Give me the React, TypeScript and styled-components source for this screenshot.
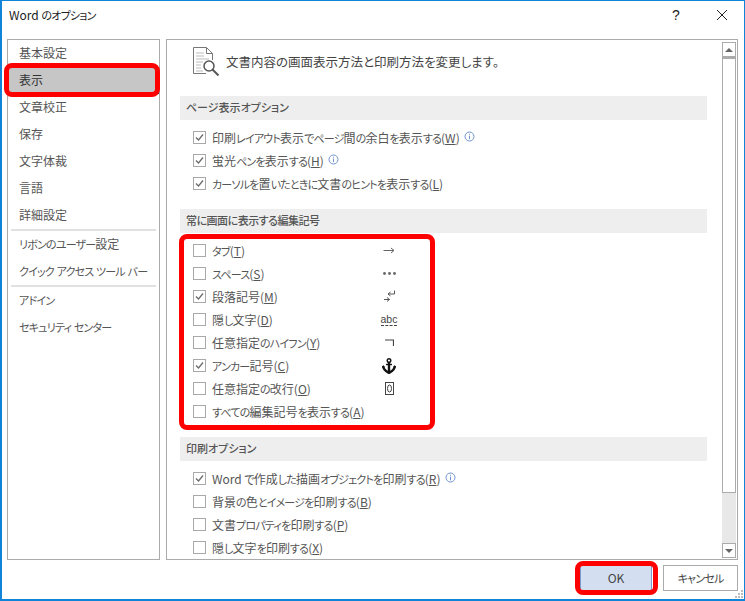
import React from 'react';
import styled, {createGlobalStyle} from 'styled-components';

const GlobalStyle = createGlobalStyle`
  html, body {
    margin: 0;
    padding: 0;
    background: #fff;
  }
`

const Window = styled.div`
  position: relative;
  box-sizing: border-box;
  width: 745px;
  height: 601px;
  display: flex;
  flex-direction: column;
  background: #fff;
  border-style: solid;
  border-color: #0f84d8;
  border-width: 1px 1px 2px 2px;
  padding: 0 6px 0 5px;
  font-family: "Noto Sans CJK JP", "Noto Sans", sans-serif;
  font-size: 12px;
  font-feature-settings: "palt";
  color: #555;
  overflow: hidden;
`

const TitleBar = styled.div`
  height: 38px;
  flex: none;
  display: flex;
  align-items: center;
  color: #222;
  font-size: 12px;
  padding: 0 0 10px 2px;
  box-sizing: border-box;
`

const TitleText = styled.div`
  flex: 1;
  margin-top: -1px;
`

const HelpMark = styled.div`
  font-family: "Liberation Sans", sans-serif;
  font-size: 14px;
  color: #222;
  width: 14px;
  margin-right: 34px;
  text-align: center;
`

const CloseMark = styled.svg`
  width: 10px;
  height: 10px;
  margin-right: 11px;
`

const Body = styled.div`
  height: 521px;
  flex: none;
  display: flex;
  gap: 6px;
`

const Sidebar = styled.div`
  box-sizing: border-box;
  width: 153px;
  flex: none;
  border: 1px solid #ababab;
`

const SideItem = styled.div<{ $selected?: boolean }>`
  height: 27px;
  line-height: 26px;
  padding-left: 11px;
  box-sizing: border-box;
  white-space: nowrap;
  background: ${(props) => props.$selected ? '#c6c6c6' : 'transparent'};
  outline: ${(props) => props.$selected ? '1px dotted #333' : 'none'};
  outline-offset: -1px;
  color: ${(props) => props.$selected ? '#333' : '#555'};
`

const SideSeparator = styled.div`
  height: 2px;
  margin: 0 3px;
  background: #e1e1e1;
`

const MainPanel = styled.div`
  box-sizing: border-box;
  flex: none;
  width: 572px;
  display: flex;
  border: 1px solid #ababab;
`

const Content = styled.div`
  flex: 1;
  padding: 0 15px 0 13px;
  overflow: hidden;
`

const Intro = styled.div`
  height: 56px;
  display: flex;
  align-items: center;
  gap: 6px;
  padding: 0 0 13px 13px;
  box-sizing: border-box;
  font-size: 12.5px;
  color: #444;
`

const SectionHeader = styled.div<{ $tight?: boolean }>`
  height: 24px;
  line-height: 23px;
  background: #eeeeee;
  padding-left: 6px;
  font-size: 11px;
  color: #555;
  font-weight: 500;
  letter-spacing: ${(props) => props.$tight ? '-0.5px' : '0'};
`

const Rows = styled.div`
  padding: 6px 0 0 13px;
  margin-bottom: 14px;
`

const Row = styled.div`
  height: 23px;
  display: flex;
  align-items: center;
  position: relative;
`

const CheckBoxFrame = styled.div`
  box-sizing: border-box;
  width: 13px;
  height: 13px;
  flex: none;
  border: 1px solid #a9a9a9;
  background: #fff;
  margin-right: 6px;
  display: flex;
  align-items: center;
  justify-content: center;
`

const RowLabel = styled.span`
  white-space: nowrap;
`

const Kana = styled.span`
  font-size: 11px;
  letter-spacing: -0.8px;
`

const InfoMark = styled.svg`
  width: 11px;
  height: 11px;
  margin-left: 4px;
  margin-top: -3px;
`

const SymbolCell = styled.div`
  position: absolute;
  left: 184px;
  top: 0;
  width: 24px;
  height: 23px;
  display: flex;
  align-items: center;
  justify-content: center;
  color: #555;
`

const AbcMark = styled.span`
  font-family: "Liberation Sans", sans-serif;
  font-size: 10.5px;
  line-height: 11px;
  border-bottom: 1px dashed #444;
  font-feature-settings: normal;
  color: #444;
`

const ScrollBar = styled.div`
  width: 14px;
  flex: none;
  margin: 2px 1px 0 0;
  height: 516px;
  background: #e8e8e8;
  display: flex;
  flex-direction: column;
`

const ScrollButton = styled.div`
  box-sizing: border-box;
  height: 15px;
  flex: none;
  background: #fff;
  border: 1px solid #ababab;
  display: flex;
  align-items: center;
  justify-content: center;
`

const ScrollThumb = styled.div`
  box-sizing: border-box;
  height: 436px;
  flex: none;
  background: #fff;
  border: 1px solid #ababab;
  border-top-width: 2px;
`

const ScrollTrack = styled.div`
  flex: 1;
`

const Arrow = styled.div<{ $down?: boolean }>`
  width: 0;
  height: 0;
  border-left: 4px solid transparent;
  border-right: 4px solid transparent;
  ${(props) => props.$down ? 'border-top: 4px solid #666;' : 'border-bottom: 4px solid #666;'}
`

const Footer = styled.div`
  flex: 1;
  display: flex;
  justify-content: flex-end;
  align-items: flex-start;
  gap: 11px;
  padding-top: 5px;
`

const FooterButton = styled.div<{ $primary?: boolean }>`
  box-sizing: border-box;
  width: ${(props) => props.$primary ? '72px' : '75px'};
  height: 26px;
  line-height: 24px;
  text-align: center;
  background: ${(props) => props.$primary ? '#d3dff0' : '#fff'};
  border: 1px solid ${(props) => props.$primary ? '#7a9bd0' : '#ababab'};
  color: #444;
`

const Grip = styled.svg`
  position: absolute;
  right: 0;
  bottom: 0;
  width: 9px;
  height: 9px;
`

const Highlight = styled.div<{ $left: number, $top: number, $width: number, $height: number }>`
  position: absolute;
  box-sizing: border-box;
  left: ${(props) => props.$left}px;
  top: ${(props) => props.$top}px;
  width: ${(props) => props.$width}px;
  height: ${(props) => props.$height}px;
  border: 5px solid #fe0000;
  border-radius: 8px;
  pointer-events: none;
`

// Kana in the reference's UI font is much narrower than the kanji next to it
const Narrow: React.FC<{ text: string }> = ({text}) => <>
    {text.split(/([\u3040-\u30ff]+)/).map((part, index) =>
        index % 2 === 1 ? <Kana key={index}>{part}</Kana> : part)}
</>

const CheckBox: React.FC<{ checked?: boolean }> = ({checked}) => <CheckBoxFrame>
    {checked && <svg width="9" height="9" viewBox="0 0 9 9">
        <path d="M1 4.5 L3.5 7 L8 1.5" fill="none" stroke="#6b6b6b" strokeWidth="1.3"/>
    </svg>}
</CheckBoxFrame>

const Info = () => <InfoMark viewBox="0 0 11 11">
    <circle cx="5.5" cy="5.5" r="4.5" fill="none" stroke="#6f93cf" strokeWidth="1"/>
    <rect x="5" y="2.7" width="1" height="1" fill="#6f93cf"/>
    <rect x="5" y="4.6" width="1" height="3.6" fill="#6f93cf"/>
</InfoMark>

const DocIcon = () => <svg width="27" height="29" viewBox="0 0 27 29" style={{flex: 'none'}}>
    <path d="M0.5 0.5 H13.5 L19.5 6.5 V13 M13.5 0.5 V6.5 H19.5 M0.5 0.5 V26.5 H13" fill="none" stroke="#777" strokeWidth="1"/>
    <path d="M3 6H11M3 9H11M3 12H16M3 15H10M3 18H8M3 21H8M3 24H10" stroke="#bbb" strokeWidth="1"/>
    <circle cx="16" cy="19" r="5" fill="#fff" stroke="#555" strokeWidth="1.5"/>
    <path d="M19.5 22.5 L25.5 28.5" stroke="#555" strokeWidth="2"/>
</svg>

const ArrowSymbol = () => <svg width="12" height="9" viewBox="0 0 12 9">
    <path d="M0.5 4.5H11M8 2L11 4.5L8 7" fill="none" stroke="#666" strokeWidth="1"/>
</svg>

const DotsSymbol = () => <svg width="13" height="3" viewBox="0 0 13 3">
    <circle cx="1.5" cy="1.5" r="1.4" fill="#666"/>
    <circle cx="6.5" cy="1.5" r="1.4" fill="#666"/>
    <circle cx="11.5" cy="1.5" r="1.4" fill="#666"/>
</svg>

const ParagraphSymbol = () => <svg width="11" height="13" viewBox="0 0 11 13">
    <path d="M10.5 0.5V4H4.5M6.5 2L4 4L6.5 6" fill="none" stroke="#555" strokeWidth="1"/>
    <path d="M0 9.5H5.5M3 7.5L5.5 9.5L3 11.5" fill="none" stroke="#555" strokeWidth="1"/>
</svg>

const HyphenSymbol = () => <svg width="9" height="7" viewBox="0 0 9 7">
    <path d="M0 1H8.5V7" fill="none" stroke="#444" strokeWidth="1.2"/>
</svg>

const AnchorSymbol = () => <svg width="14" height="16" viewBox="0 0 14 16">
    <circle cx="7" cy="2.5" r="1.8" fill="none" stroke="#111" strokeWidth="1.4"/>
    <path d="M7 4V15" stroke="#111" strokeWidth="2.4"/>
    <path d="M4 6.5H10" stroke="#111" strokeWidth="1.4"/>
    <path d="M1.2 8C1.2 12 4.5 13.6 7 15C9.5 13.6 12.8 12 12.8 8" fill="none" stroke="#111" strokeWidth="2.4"/>
    <path d="M0 9.5L1.2 7L3 9.5ZM11 9.5L12.8 7L14 9.5Z" fill="#111"/>
</svg>

const ZeroBoxSymbol = () => <svg width="9" height="13" viewBox="0 0 9 13">
    <rect x="0.5" y="0.5" width="8" height="12" fill="none" stroke="#444" strokeWidth="1"/>
    <ellipse cx="4.5" cy="6.5" rx="2" ry="3.6" fill="none" stroke="#444" strokeWidth="1"/>
</svg>

interface OptionRow {
    label: string
    accessKey: string
    checked?: boolean
    info?: boolean
    symbol?: React.ReactNode
}

const pageOptions: OptionRow[] = [
    {label: '印刷レイアウト表示でページ間の余白を表示する', accessKey: 'W', checked: true, info: true},
    {label: '蛍光ペンを表示する', accessKey: 'H', checked: true, info: true},
    {label: 'カーソルを置いたときに文書のヒントを表示する', accessKey: 'L', checked: true},
]

const markOptions: OptionRow[] = [
    {label: 'タブ', accessKey: 'T', symbol: <ArrowSymbol/>},
    {label: 'スペース', accessKey: 'S', symbol: <DotsSymbol/>},
    {label: '段落記号', accessKey: 'M', checked: true, symbol: <ParagraphSymbol/>},
    {label: '隠し文字', accessKey: 'D', symbol: <AbcMark>abc</AbcMark>},
    {label: '任意指定のハイフン', accessKey: 'Y', symbol: <HyphenSymbol/>},
    {label: 'アンカー記号', accessKey: 'C', checked: true, symbol: <AnchorSymbol/>},
    {label: '任意指定の改行', accessKey: 'O', symbol: <ZeroBoxSymbol/>},
    {label: 'すべての編集記号を表示する', accessKey: 'A'},
]

const printOptions: OptionRow[] = [
    {label: 'Word で作成した描画オブジェクトを印刷する', accessKey: 'R', checked: true, info: true},
    {label: '背景の色とイメージを印刷する', accessKey: 'B'},
    {label: '文書プロパティを印刷する', accessKey: 'P'},
    {label: '隠し文字を印刷する', accessKey: 'X'},
]

const OptionList: React.FC<{ rows: OptionRow[] }> = ({rows}) => <Rows>
    {rows.map((row) => <Row key={row.accessKey}>
        <CheckBox checked={row.checked}/>
        <RowLabel><Narrow text={row.label}/>(<u>{row.accessKey}</u>)</RowLabel>
        {row.info && <Info/>}
        {row.symbol && <SymbolCell>{row.symbol}</SymbolCell>}
    </Row>)}
</Rows>

const App: React.FC = () => {
    return <>
        <GlobalStyle/>
        <Window>
            <TitleBar>
                <TitleText><Narrow text="Word のオプション"/></TitleText>
                <HelpMark>?</HelpMark>
                <CloseMark viewBox="0 0 10 10">
                    <path d="M0 0L10 10M10 0L0 10" stroke="#222" strokeWidth="1"/>
                </CloseMark>
            </TitleBar>
            <Body>
                <Sidebar>
                    <SideItem>基本設定</SideItem>
                    <SideItem $selected>表示</SideItem>
                    <SideItem>文章校正</SideItem>
                    <SideItem>保存</SideItem>
                    <SideItem>文字体裁</SideItem>
                    <SideItem>言語</SideItem>
                    <SideItem>詳細設定</SideItem>
                    <SideSeparator/>
                    <SideItem><Narrow text="リボンのユーザー設定"/></SideItem>
                    <SideItem><Narrow text="クイック アクセス ツール バー"/></SideItem>
                    <SideSeparator/>
                    <SideItem><Narrow text="アドイン"/></SideItem>
                    <SideItem><Narrow text="セキュリティ センター"/></SideItem>
                </Sidebar>
                <MainPanel>
                    <Content>
                        <Intro>
                            <DocIcon/>
                            文書内容の画面表示方法と印刷方法を変更します。
                        </Intro>
                        <SectionHeader>ページ表示オプション</SectionHeader>
                        <OptionList rows={pageOptions}/>
                        <SectionHeader $tight>常に画面に表示する編集記号</SectionHeader>
                        <OptionList rows={markOptions}/>
                        <SectionHeader>印刷オプション</SectionHeader>
                        <OptionList rows={printOptions}/>
                    </Content>
                    <ScrollBar>
                        <ScrollButton><Arrow/></ScrollButton>
                        <ScrollThumb/>
                        <ScrollTrack/>
                        <ScrollButton><Arrow $down/></ScrollButton>
                    </ScrollBar>
                </MainPanel>
            </Body>
            <Footer>
                <FooterButton $primary>OK</FooterButton>
                <FooterButton><Narrow text="キャンセル"/></FooterButton>
            </Footer>
            <Grip viewBox="0 0 9 9">
                <path d="M6 0h2v2H6zM3 3h2v2H3zM6 3h2v2H6zM0 6h2v2H0zM3 6h2v2H3zM6 6h2v2H6z" fill="#bdbdbd"/>
            </Grip>
            <Highlight $left={2} $top={62} $width={156} $height={34}/>
            <Highlight $left={177} $top={233} $width={256} $height={196}/>
            <Highlight $left={573} $top={560} $width={83} $height={34}/>
        </Window>
    </>
}

export default App
